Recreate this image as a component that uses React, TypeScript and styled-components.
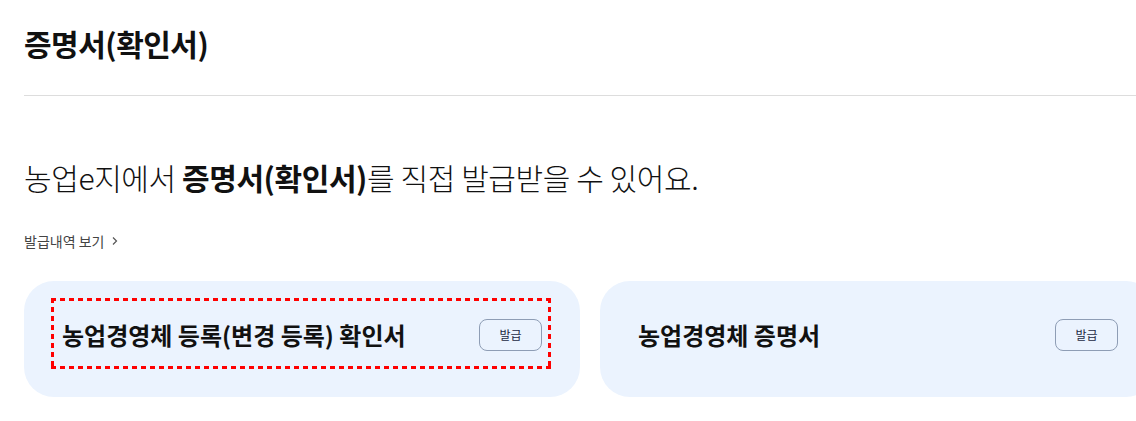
import React from 'react'
import styled, { createGlobalStyle } from 'styled-components'

const GlobalStyle = createGlobalStyle`
  html, body {
    margin: 0;
    padding: 0;
    background: #ffffff;
    overflow: hidden;
  }
  body {
    font-family: 'Noto Sans CJK KR', 'Noto Sans', sans-serif;
    color: #111111;
  }
`

const Page = styled.div`
  width: 1132px;
  padding: 0 0 0 24px;
`

const PageTitle = styled.h1`
  margin: 0;
  padding-top: 23px;
  height: 96px;
  box-sizing: border-box;
  font-size: 30px;
  font-weight: 700;
  letter-spacing: -0.5px;
  line-height: 40px;
  border-bottom: 1px solid #dddddd;
`

const Lead = styled.p`
  margin: 0;
  padding-top: 59px;
  font-size: 30px;
  font-weight: 300;
  letter-spacing: -0.4px;
  line-height: 44px;

  strong {
    font-weight: 700;
  }
`

const HistoryLink = styled.a`
  display: flex;
  width: fit-content;
  align-items: center;
  gap: 8px;
  margin-top: 33px;
  font-size: 14px;
  color: #444444;
  text-decoration: none;
  line-height: 18px;
`

const CardRow = styled.div`
  display: grid;
  grid-template-columns: 556px 556px;
  gap: 20px;
  margin-top: 31px;
`

const Card = styled.div`
  background: #ebf3fe;
  border-radius: 30px;
  height: 116px;
  box-sizing: border-box;
  padding: 17px 29px 28px 27px;
`

const CardInner = styled.div<{ $focused?: boolean }>`
  position: relative;
  display: flex;
  align-items: center;
  justify-content: space-between;
  height: 71px;
  box-sizing: border-box;
  padding: 2px 9px 0 11px;

  &::after {
    content: '';
    display: ${p => (p.$focused ? 'block' : 'none')};
    position: absolute;
    inset: 0;
    pointer-events: none;
    background:
      linear-gradient(90deg, #ff0000 5px, transparent 5px) top left / 9px 3px repeat-x,
      linear-gradient(90deg, #ff0000 5px, transparent 5px) bottom left / 9px 3px repeat-x,
      linear-gradient(180deg, #ff0000 5px, transparent 5px) top left / 3px 9px repeat-y,
      linear-gradient(180deg, #ff0000 5px, transparent 5px) top right / 3px 9px repeat-y;
  }
`

const CardTitle = styled.span`
  font-size: 24px;
  font-weight: 700;
  letter-spacing: 0;
  color: #111111;
`

const IssueButton = styled.button`
  width: 63px;
  height: 32px;
  border: 1px solid #8e9db5;
  border-radius: 8px;
  background: transparent;
  font-family: inherit;
  font-size: 12px;
  color: #1b2a44;
  padding: 0;
  cursor: pointer;
`

const certificates = [
  { title: '농업경영체 등록(변경 등록) 확인서', focused: true },
  { title: '농업경영체 증명서', focused: false },
]

export default function App() {
  return (
    <>
      <GlobalStyle />
      <Page>
        <PageTitle>증명서(확인서)</PageTitle>
        <Lead>
          농업e지에서 <strong>증명서(확인서)</strong>를 직접 발급받을 수 있어요.
        </Lead>
        <HistoryLink href="#">
          발급내역 보기
          <svg width="6" height="10" viewBox="0 0 6 10" fill="none">
            <path d="M1 1.5 L4.5 5 L1 8.5" stroke="#555" strokeWidth="1.2" />
          </svg>
        </HistoryLink>
        <CardRow>
          {certificates.map(c => (
            <Card key={c.title}>
              <CardInner $focused={c.focused}>
                <CardTitle>{c.title}</CardTitle>
                <IssueButton>발급</IssueButton>
              </CardInner>
            </Card>
          ))}
        </CardRow>
      </Page>
    </>
  )
}
